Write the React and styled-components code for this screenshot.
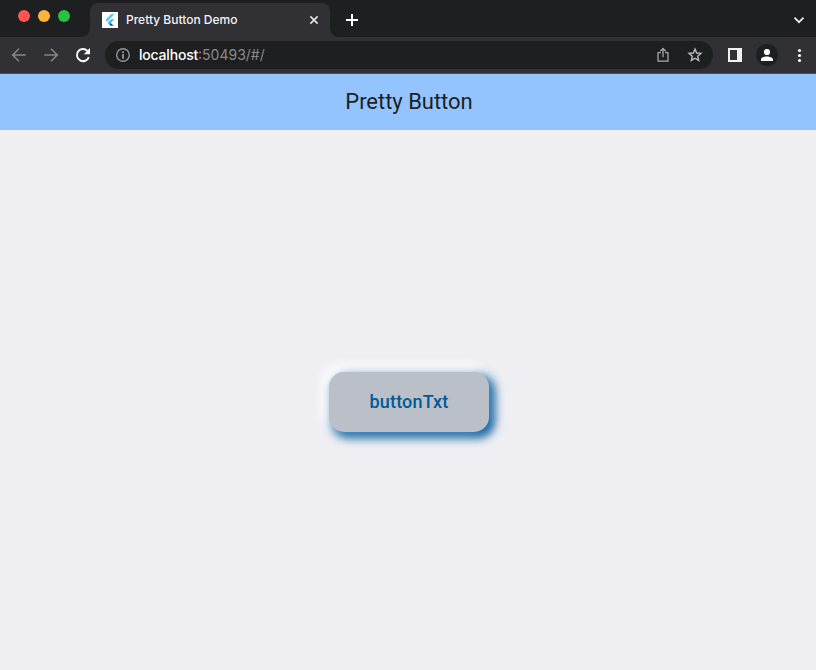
import React from "react";
import styled, { createGlobalStyle } from "styled-components";

const GlobalStyle = createGlobalStyle`
  * { box-sizing: border-box; }
  body { margin: 0; overflow: hidden; }
`;

const Window = styled.div`
  display: flex;
  flex-direction: column;
  width: 816px;
  height: 670px;
  background: #eeeef3;
  font-family: Inter, "Liberation Sans", sans-serif;
`;

const TabStrip = styled.header`
  display: flex;
  height: 37px;
  background: #1e1f21;
`;

const WindowControls = styled.div`
  display: flex;
  gap: 8px;
  width: 90px;
  padding: 10px 0 0 18px;
`;

const ControlDot = styled.span`
  width: 12px;
  height: 12px;
  border-radius: 50%;
  background: ${(p) => p.$color};
`;

const Tab = styled.div`
  position: relative;
  display: flex;
  align-items: center;
  width: 240px;
  height: 34px;
  margin-top: 3px;
  padding: 0 10px 0 12px;
  border-radius: 8px 8px 0 0;
  background: #303035;
  &::before,
  &::after {
    content: "";
    position: absolute;
    bottom: 0;
    width: 8px;
    height: 8px;
  }
  &::before {
    right: 100%;
    background: radial-gradient(circle at 0 0, transparent 7.5px, #303035 8px);
  }
  &::after {
    left: 100%;
    background: radial-gradient(circle at 100% 0, transparent 7.5px, #303035 8px);
  }
`;

const TabTitle = styled.span`
  flex: 1;
  margin-left: 8px;
  font: 500 12px/16px Inter, sans-serif;
  letter-spacing: 0;
  color: #f3f4f6;
  white-space: nowrap;
`;

const NewTab = styled.div`
  display: flex;
  padding: 13px 0 0 15px;
`;

const TabSearch = styled.div`
  display: flex;
  margin-left: auto;
  padding: 12px 9px 0 0;
`;

const Toolbar = styled.nav`
  display: flex;
  align-items: center;
  height: 37px;
  padding: 0 8px 0 11px;
  background: #303035;
  border-bottom: 1px solid #4b4b50;
`;

const NavButtons = styled.div`
  display: flex;
  gap: 16px;
  width: 94px;
`;

const AddressBar = styled.div`
  display: flex;
  align-items: center;
  width: 608px;
  height: 28px;
  padding: 0 10px;
  border-radius: 14px;
  background: #1e1f21;
`;

const Url = styled.span`
  flex: 1;
  margin-left: 8px;
  font: 400 14px/20px Inter, sans-serif;
  letter-spacing: 0;
  color: #898b8f;
`;

const Host = styled.span`
  font-weight: 500;
  letter-spacing: -0.2px;
  color: #fff;
`;

const AddressActions = styled.div`
  display: flex;
  gap: 16px;
`;

const ToolbarActions = styled.div`
  display: flex;
  align-items: center;
  margin-left: auto;
`;

const Avatar = styled.span`
  display: flex;
  align-items: center;
  justify-content: center;
  width: 22px;
  height: 22px;
  margin: 0 14px;
  border-radius: 50%;
  background: #1e1f21;
`;

const AppBar = styled.div`
  display: flex;
  align-items: center;
  justify-content: center;
  height: 56px;
  padding-left: 2px;
  background: #93c4fd;
  color: #1c1f24;
  font: 400 22px/28px Roboto, sans-serif;
  letter-spacing: -0.03px;
`;

const Body = styled.main`
  display: flex;
  flex: 1;
  align-items: center;
  justify-content: center;
  padding: 3px 0 0 2px;
`;

const PrettyButton = styled.button`
  width: 160px;
  height: 60px;
  padding: 0;
  border: 0;
  border-radius: 15px;
  background: #bbbfc8;
  color: #005a9a;
  font: 500 18px/24px Roboto, sans-serif;
  letter-spacing: 0.16px;
  box-shadow: -4px -4px 15px 1px rgba(255, 255, 255, 0.5), 4px 4px 10px 2px #005a9a, -4px -4px 12px 2px #fff;
`;

const Icon = styled.svg`
  display: block;
  flex: none;
  fill: none;
`;

const FlutterIcon = () => (
  <Icon width="16" height="16" viewBox="0 0 16 16">
    <path fill="#fff" d="M0 0h16v16H0z" />
    <path fill="#55c9f7" d="M9.1 2h3.3L5.3 9.7 3.5 8z" />
    <path fill="#42b5ec" d="M9.3 7.3h3.1l-4 4-1.6-1.6z" />
    <path fill="#42b5ec" d="m5.6 10.9 1.6-1.6 1.6 1.6-1.6 1.6z" />
    <path fill="#075595" d="m7.2 12.5 1.6-1.6 2.9 2.8H8.6z" />
  </Icon>
);

const CloseIcon = () => (
  <Icon width="12" height="12" viewBox="0 0 12 12">
    <path d="m2.4 2.4 7.2 7.2m0-7.2L2.4 9.6" stroke="#e7e8ea" strokeWidth="1.5" />
  </Icon>
);

const PlusIcon = () => (
  <Icon width="14" height="14" viewBox="0 0 14 14">
    <path d="M7 1v12M1 7h12" stroke="#fff" strokeWidth="2" />
  </Icon>
);

const ChevronIcon = () => (
  <Icon width="16" height="16" viewBox="0 0 16 16">
    <path d="m3.5 5.7 4.5 4.5 4.5-4.5" stroke="#f3f3f4" strokeWidth="1.7" />
  </Icon>
);

const BackIcon = () => (
  <Icon width="16" height="16" viewBox="0 0 16 16">
    <path d="M8 1.8 1.7 8 8 14.2M2 8h12.7" stroke="#858587" strokeWidth="1.6" />
  </Icon>
);

const ForwardIcon = () => (
  <Icon width="16" height="16" viewBox="0 0 16 16">
    <path d="M8 1.8 14.3 8 8 14.2M1.3 8H14" stroke="#858587" strokeWidth="1.6" />
  </Icon>
);

const ReloadIcon = () => (
  <Icon width="16" height="16" viewBox="0 0 16 16">
    <path d="M13.8 10.1A6.1 6.1 0 1 1 12.4 3.8" stroke="#fff" strokeWidth="1.9" />
    <path d="M15 1v6.2H8.8z" fill="#fff" />
  </Icon>
);

const InfoIcon = () => (
  <Icon width="16" height="16" viewBox="0 0 16 16">
    <circle cx="8" cy="8" r="6.3" stroke="#92959b" strokeWidth="1.4" />
    <path d="M7.2 7.1h1.6v4.6H7.2zM7.2 4.3h1.6v1.6H7.2z" fill="#a3a6ac" />
  </Icon>
);

const ShareIcon = () => (
  <Icon width="16" height="16" viewBox="0 0 16 16">
    <path
      d="M5.8 5.5H3v8.7h10V5.5h-2.8M8 10.2V2M5.2 4.3 8 1.5l2.8 2.8"
      stroke="#aaacae"
      strokeWidth="1.25"
      strokeLinejoin="round"
    />
  </Icon>
);

const StarIcon = () => (
  <Icon width="16" height="16" viewBox="0 0 16 16">
    <path
      d="m8 2.1 1.65 3.95 4.3.37-3.25 2.82.97 4.2L8 11.2l-3.67 2.24.97-4.2-3.25-2.82 4.3-.37z"
      stroke="#b9bbbd"
      strokeWidth="1.4"
    />
  </Icon>
);

const SidePanelIcon = () => (
  <Icon width="14" height="14" viewBox="0 0 14 14">
    <path fill="#eff1f4" fillRule="evenodd" d="M0 0h14v14H0zM2 2v10h7V2z" />
  </Icon>
);

const PersonIcon = () => (
  <Icon width="14" height="14" viewBox="0 0 14 14">
    <circle cx="7" cy="4" r="3.1" fill="#fff" />
    <path d="M1 13v-1.6C1 9.4 4.6 8.4 7 8.4s6 1 6 3V13z" fill="#fff" />
  </Icon>
);

const MenuIcon = () => (
  <Icon width="16" height="16" viewBox="0 0 16 16">
    <circle cx="7.5" cy="3.5" r="1.6" fill="#f5f5f6" />
    <circle cx="7.5" cy="8.5" r="1.6" fill="#f5f5f6" />
    <circle cx="7.5" cy="13.5" r="1.6" fill="#f5f5f6" />
  </Icon>
);

export default function App() {
  return (
    <Window>
      <GlobalStyle />
      <TabStrip>
        <WindowControls>
          <ControlDot $color="#ff544f" />
          <ControlDot $color="#ffb339" />
          <ControlDot $color="#29c141" />
        </WindowControls>
        <Tab>
          <FlutterIcon />
          <TabTitle>Pretty Button Demo</TabTitle>
          <CloseIcon />
        </Tab>
        <NewTab>
          <PlusIcon />
        </NewTab>
        <TabSearch>
          <ChevronIcon />
        </TabSearch>
      </TabStrip>
      <Toolbar>
        <NavButtons>
          <BackIcon />
          <ForwardIcon />
          <ReloadIcon />
        </NavButtons>
        <AddressBar>
          <InfoIcon />
          <Url>
            <Host>localhost</Host>:50493/#/
          </Url>
          <AddressActions>
            <ShareIcon />
            <StarIcon />
          </AddressActions>
        </AddressBar>
        <ToolbarActions>
          <SidePanelIcon />
          <Avatar>
            <PersonIcon />
          </Avatar>
          <MenuIcon />
        </ToolbarActions>
      </Toolbar>
      <AppBar>Pretty Button</AppBar>
      <Body>
        <PrettyButton>buttonTxt</PrettyButton>
      </Body>
    </Window>
  );
}
